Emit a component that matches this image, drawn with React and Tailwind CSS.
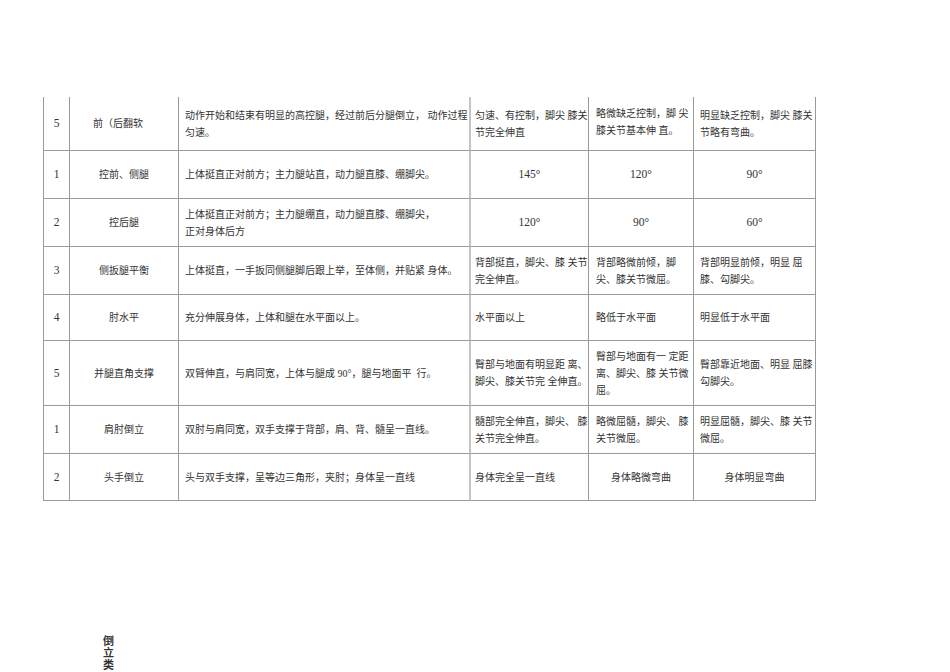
import React from "react";

const B = "border-[#9a9a9a]";

function Cell({ children, className = "", last }) {
  return (
    <div
      className={`border-b ${last ? "border-r-2 border-r-[#c4c4c4]" : "border-r"} ${B} flex items-center text-[10px] leading-[17px] text-[#333] ${className}`}
    >
      {children}
    </div>
  );
}

function Lines({ lines }) {
  return (
    <div className="whitespace-pre">
      {lines.map((l, i) => (
        <div key={i}>{l}</div>
      ))}
    </div>
  );
}

const rows = [
  {
    n: "5",
    name: "前（后翻软",
    nameCls: "pr-3",
    desc: ["动作开始和结束有明显的高控腿，经过前后分腿倒立， 动作过程", "匀速。"],
    a: ["匀速、有控制，脚尖 膝关", "节完全伸直"],
    b: ["略微缺乏控制，脚 尖", "膝关节基本伸 直。"],
    bTop: true,
    c: ["明显缺乏控制，脚尖 膝关", "节略有弯曲。"],
  },
  { n: "1", name: "控前、侧腿", desc: ["上体挺直正对前方；主力腿站直，动力腿直膝、绷脚尖。"], deg: ["145°", "120°", "90°"] },
  { n: "2", name: "控后腿", desc: ["上体挺直正对前方；主力腿绷直，动力腿直膝、绷脚尖，", "正对身体后方"], deg: ["120°", "90°", "60°"] },
  {
    n: "3",
    name: "侧扳腿平衡",
    desc: ["上体挺直，一手扳同侧腿脚后跟上举，至体侧，并贴紧 身体。"],
    a: ["背部挺直，脚尖、膝 关节", "完全伸直。"],
    b: ["背部略微前倾，脚", "尖、膝关节微屈。"],
    c: ["背部明显前倾，明显 屈", "膝、勾脚尖。"],
  },
  { n: "4", name: "肘水平", desc: ["充分伸展身体，上体和腿在水平面以上。"], a: ["水平面以上"], b: ["略低于水平面"], c: ["明显低于水平面"] },
  {
    n: "5",
    name: "并腿直角支撑",
    desc: ["双臂伸直，与肩同宽，上体与腿成 90°，腿与地面平  行。"],
    a: ["臀部与地面有明显距 离、", "脚尖、膝关节完 全伸直。"],
    b: ["臀部与地面有一 定距", "离、脚尖、膝 关节微", "屈。"],
    c: ["臀部靠近地面、明显 屈膝", "勾脚尖。"],
  },
  {
    n: "1",
    name: "肩肘倒立",
    desc: ["双肘与肩同宽，双手支撑于背部，肩、背、髓呈一直线。"],
    a: ["髓部完全伸直，脚尖、 膝", "关节完全伸直。"],
    b: ["略微屈髓，脚尖、 膝", "关节微屈。"],
    c: ["明显屈髓，脚尖、膝 关节", "微屈。"],
  },
  {
    n: "2",
    name: "头手倒立",
    desc: ["头与双手支撑，呈等边三角形，夹肘；身体呈一直线"],
    a: ["身体完全呈一直线"],
    b: ["身体略微弯曲"],
    c: ["身体明显弯曲"],
    center: true,
  },
];

export default function App() {
  return (
    <div
      className="w-[950px] h-[672px] bg-white overflow-hidden pt-[97px] pl-[43px]"
      style={{ fontFamily: '"Liberation Serif", "Noto Sans CJK SC", serif' }}
    >
      <div
        className={`grid w-[773px] border-l ${B} grid-cols-[26px_109px_292px_118px_105px_122px] grid-rows-[54px_48px_48px_48px_46px_65px_48px_47px]`}
      >
        {rows.map((r, i) => (
          <React.Fragment key={i}>
            <Cell className="justify-center text-[11.5px]">{r.n}</Cell>
            <Cell className={`justify-center ${r.nameCls || ""}`}>{r.name}</Cell>
            <Cell className="pl-[6px]" last>
              <Lines lines={r.desc} />
            </Cell>
            {r.deg ? (
              r.deg.map((d, j) => (
                <Cell key={j} className="justify-center text-[11.5px]">
                  {d}
                </Cell>
              ))
            ) : (
              <>
                <Cell className="pl-[4px] overflow-visible">
                  <Lines lines={r.a} />
                </Cell>
                <Cell className={`${r.center ? "justify-center" : "pl-[7px]"} ${r.bTop ? "items-start pt-[8px]" : ""}`}>
                  <Lines lines={r.b} />
                </Cell>
                <Cell className={r.center ? "justify-center" : "pl-[6px]"}>
                  <Lines lines={r.c} />
                </Cell>
              </>
            )}
          </React.Fragment>
        ))}
      </div>
      <div className="mt-[134px] ml-[60px] flex flex-col text-[11px] leading-[12px] font-bold text-[#333] w-[12px]">
        <span>倒</span>
        <span>立</span>
        <span>类</span>
      </div>
    </div>
  );
}
